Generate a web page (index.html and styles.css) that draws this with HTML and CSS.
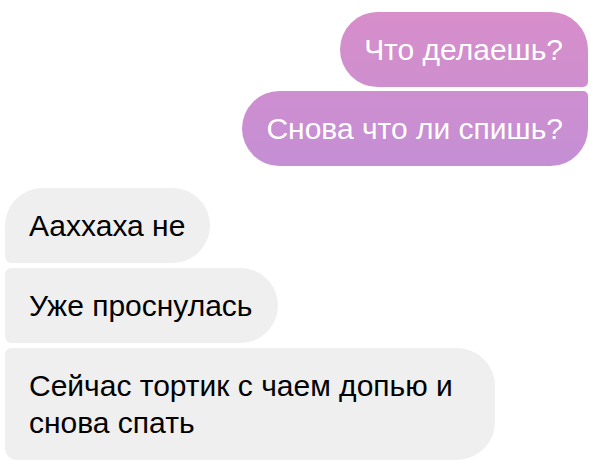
FILE: index.html
```html
<!DOCTYPE html>
<html lang="ru">
<head>
<meta charset="utf-8">
<link rel="stylesheet" href="styles.css">
</head>
<body>
<div class="chat">
  <div class="group sent">
    <div class="bubble out first">Что делаешь?</div>
    <div class="bubble out last">Снова что ли спишь?</div>
  </div>
  <div class="group received">
    <div class="bubble in first">Ааххаха не</div>
    <div class="bubble in mid">Уже проснулась</div>
    <div class="bubble in last wide">Сейчас тортик с чаем допью и снова спать</div>
  </div>
</div>
</body>
</html>
```
FILE: styles.css
```css
html, body {
  margin: 0;
  padding: 0;
  background: #ffffff;
}
body {
  width: 604px;
  height: 466px;
  overflow: hidden;
  font-family: "Liberation Sans", Arial, sans-serif;
  font-size: 30px;
  line-height: 37px;
}
.chat {
  display: flex;
  flex-direction: column;
  gap: 22px;
  padding-top: 12px;
}
.group {
  display: flex;
  flex-direction: column;
  gap: 4px;
}
.sent {
  align-items: flex-end;
  padding-right: 16px;
}
.received {
  align-items: flex-start;
  padding-left: 5px;
  gap: 5px;
}
.bubble {
  padding: 19px 25px 19px 24px;
  box-sizing: border-box;
}
.out {
  color: #ffffff;
  background: linear-gradient(to bottom, #d98ec9 0px, #c48fd5 170px) fixed;
}
.out.first {
  border-radius: 38px 38px 5px 38px;
}
.out.last {
  border-radius: 38px 5px 38px 38px;
}
.in {
  color: #000000;
  background: #efefef;
}
.in.first {
  border-radius: 38px 38px 38px 6px;
}
.in.mid {
  border-radius: 6px 38px 38px 6px;
}
.in.last {
  border-radius: 6px 38px 38px 12px;
}
.wide {
  width: 490px;
}
```
